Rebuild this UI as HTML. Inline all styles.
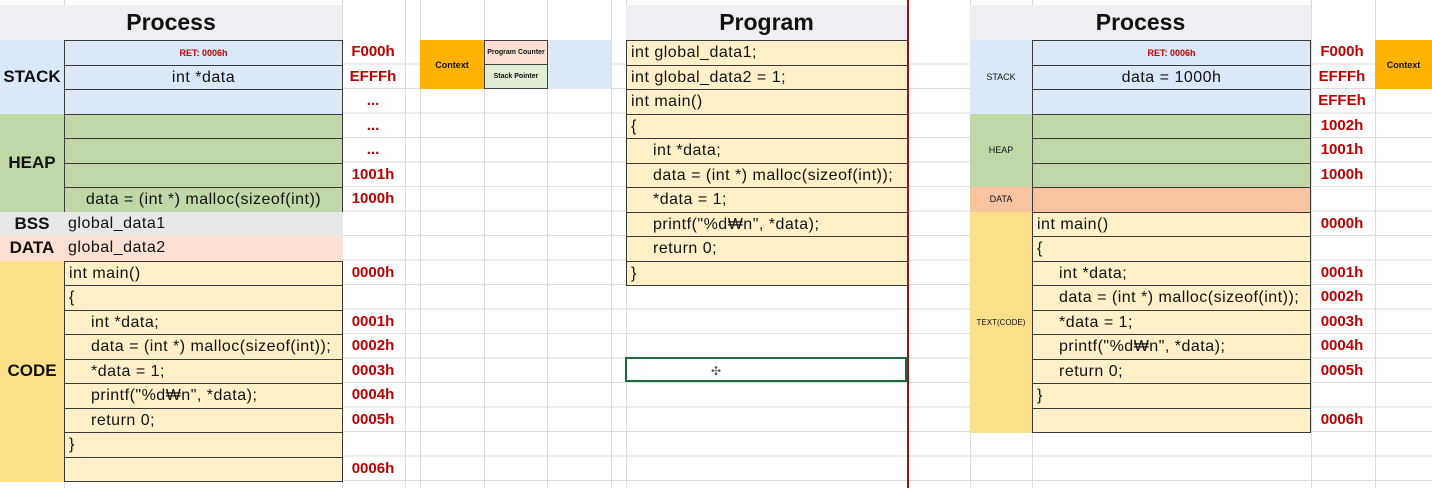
<!DOCTYPE html>
<html><head><meta charset="utf-8"><style>
body{margin:0;width:1432px;height:488px;overflow:hidden;position:relative;background:#fff;font-family:"Liberation Sans","Noto Sans CJK KR",sans-serif;color:#111}
.g{position:absolute;left:0;top:40px;width:1432px;height:448px;background:repeating-linear-gradient(to bottom,transparent 0,transparent 23.5px,#dcdcdc 23.5px,#dcdcdc 24.5px)}
.v{position:absolute;top:0;width:1px;height:488px;background:#dcdcdc}
.r{position:absolute;height:25.5px;line-height:24px;box-sizing:border-box;font-size:16px;letter-spacing:0.5px;white-space:nowrap;overflow:hidden}
.k{border:1px solid #3a3a3a}
.a{color:#c00000;font-weight:bold;font-size:15px;letter-spacing:0;text-align:center;width:62px;height:24.5px}
.L{position:absolute;box-sizing:border-box;display:flex;align-items:center;justify-content:center;font-weight:bold;font-size:17px}
.h{position:absolute;top:5px;height:35px;background:#f0eef2;font-weight:bold;font-size:23px;text-align:center;line-height:35px}
.lb{left:64px;width:279px}.rb{left:1032px;width:279px}.pb{left:626px;width:282px}
.st{background:#dae8f8}.hp{background:#c0d8a8}.cd{background:#fff0c8}
.i{padding-left:26px}.p{padding-left:4px}
</style></head><body>
<div class="g"></div>
<div class="v" style="left:64px"></div><div class="v" style="left:342px"></div><div class="v" style="left:405px"></div><div class="v" style="left:420px"></div><div class="v" style="left:484px"></div><div class="v" style="left:547px"></div><div class="v" style="left:611px"></div><div class="v" style="left:626px"></div><div class="v" style="left:970px"></div><div class="v" style="left:1032px"></div><div class="v" style="left:1311px"></div><div class="v" style="left:1375px"></div>
<div style="position:absolute;left:907px;top:0;width:2px;height:488px;background:#a01010"></div>

<div class="h" style="left:0;width:342px">Process</div>
<div class="L st" style="left:0;top:40px;width:64px;height:73.5px">STACK</div>
<div class="L hp" style="left:0;top:113.5px;width:64px;height:98px">HEAP</div>
<div class="L" style="left:0;top:211.5px;width:64px;height:24.5px;background:#e8e8e8">BSS</div>
<div class="L" style="left:0;top:236px;width:64px;height:24.5px;background:#fde0d4">DATA</div>
<div class="L" style="left:0;top:260.5px;width:64px;height:221px;background:#ffe08a">CODE</div>
<div class="r k st lb" style="top:40px;text-align:center;font-size:9px;letter-spacing:0;color:#c00000;font-weight:bold">RET: 0006h</div>
<div class="r k st lb" style="top:64.5px;text-align:center">int *data</div>
<div class="r k st lb" style="top:89px"></div>
<div class="r k hp lb" style="top:113.5px"></div>
<div class="r k hp lb" style="top:138px"></div>
<div class="r k hp lb" style="top:162.5px"></div>
<div class="r k hp lb" style="top:187px;text-align:center">data = (int *) malloc(sizeof(int))</div>
<div class="r lb p" style="top:211.5px;background:#e8e8e8">global_data1</div>
<div class="r lb p" style="top:236px;background:#fde0d4">global_data2</div>
<div class="r k cd lb p" style="top:260.5px">int main()</div>
<div class="r k cd lb p" style="top:285px">{</div>
<div class="r k cd lb i" style="top:309.5px">int *data;</div>
<div class="r k cd lb i" style="top:334px">data = (int *) malloc(sizeof(int));</div>
<div class="r k cd lb i" style="top:358.5px">*data = 1;</div>
<div class="r k cd lb i" style="top:383px">printf("%d₩n", *data);</div>
<div class="r k cd lb i" style="top:407.5px">return 0;</div>
<div class="r k cd lb p" style="top:432px">}</div>
<div class="r k cd lb" style="top:456.5px"></div>
<div class="r a" style="left:342px;top:40px">F000h</div>
<div class="r a" style="left:342px;top:64.5px">EFFFh</div>
<div class="r a" style="left:342px;top:89px">...</div>
<div class="r a" style="left:342px;top:113.5px">...</div>
<div class="r a" style="left:342px;top:138px">...</div>
<div class="r a" style="left:342px;top:162.5px">1001h</div>
<div class="r a" style="left:342px;top:187px">1000h</div>
<div class="r a" style="left:342px;top:260.5px">0000h</div>
<div class="r a" style="left:342px;top:309.5px">0001h</div>
<div class="r a" style="left:342px;top:334px">0002h</div>
<div class="r a" style="left:342px;top:358.5px">0003h</div>
<div class="r a" style="left:342px;top:383px">0004h</div>
<div class="r a" style="left:342px;top:407.5px">0005h</div>
<div class="r a" style="left:342px;top:456.5px">0006h</div>

<div style="position:absolute;left:548px;top:40px;width:63px;height:49px;background:#dae8f8"></div>
<div class="L" style="left:420px;top:40px;width:64px;height:49px;background:#ffb300;font-size:9px">Context</div>
<div class="L" style="left:484px;top:40px;width:64px;height:25px;background:#fde0d4;font-size:7px;border:1px solid #444">Program Counter</div>
<div class="L" style="left:484px;top:64px;width:64px;height:25px;background:#e0ecd4;font-size:7px;border:1px solid #444">Stack Pointer</div>

<div class="h" style="left:626px;width:281px">Program</div>
<div class="r k cd pb p" style="top:40px">int global_data1;</div>
<div class="r k cd pb p" style="top:64.5px">int global_data2 = 1;</div>
<div class="r k cd pb p" style="top:89px">int main()</div>
<div class="r k cd pb p" style="top:113.5px">{</div>
<div class="r k cd pb i" style="top:138px">int *data;</div>
<div class="r k cd pb i" style="top:162.5px">data = (int *) malloc(sizeof(int));</div>
<div class="r k cd pb i" style="top:187px">*data = 1;</div>
<div class="r k cd pb i" style="top:211.5px">printf("%d₩n", *data);</div>
<div class="r k cd pb i" style="top:236px">return 0;</div>
<div class="r k cd pb p" style="top:260.5px">}</div>
<div style="position:absolute;left:625px;top:357px;width:282px;height:25px;box-sizing:border-box;border:2px solid #1e6b3a"></div>
<div style="position:absolute;left:711px;top:364px;font-size:12px;color:#555">✣</div>

<div class="h" style="left:970px;width:341px">Process</div>
<div class="L st" style="left:970px;top:40px;width:62px;height:73.5px;font-weight:normal;font-size:9px">STACK</div>
<div class="L hp" style="left:970px;top:113.5px;width:62px;height:73.5px;font-weight:normal;font-size:9px">HEAP</div>
<div class="L" style="left:970px;top:187px;width:62px;height:24.5px;background:#f8c4a0;font-weight:normal;font-size:9px">DATA</div>
<div class="L" style="left:970px;top:211.5px;width:62px;height:221px;background:#ffe08a;font-weight:normal;font-size:8px">TEXT(CODE)</div>
<div class="r k st rb" style="top:40px;text-align:center;font-size:9px;letter-spacing:0;color:#c00000;font-weight:bold">RET: 0006h</div>
<div class="r k st rb" style="top:64.5px;text-align:center">data = 1000h</div>
<div class="r k st rb" style="top:89px"></div>
<div class="r k hp rb" style="top:113.5px"></div>
<div class="r k hp rb" style="top:138px"></div>
<div class="r k hp rb" style="top:162.5px"></div>
<div class="r k rb" style="top:187px;background:#f8c4a0"></div>
<div class="r k cd rb p" style="top:211.5px">int main()</div>
<div class="r k cd rb p" style="top:236px">{</div>
<div class="r k cd rb i" style="top:260.5px">int *data;</div>
<div class="r k cd rb i" style="top:285px">data = (int *) malloc(sizeof(int));</div>
<div class="r k cd rb i" style="top:309.5px">*data = 1;</div>
<div class="r k cd rb i" style="top:334px">printf("%d₩n", *data);</div>
<div class="r k cd rb i" style="top:358.5px">return 0;</div>
<div class="r k cd rb p" style="top:383px">}</div>
<div class="r k cd rb" style="top:407.5px"></div>
<div class="r a" style="left:1311px;top:40px">F000h</div>
<div class="r a" style="left:1311px;top:64.5px">EFFFh</div>
<div class="r a" style="left:1311px;top:89px">EFFEh</div>
<div class="r a" style="left:1311px;top:113.5px">1002h</div>
<div class="r a" style="left:1311px;top:138px">1001h</div>
<div class="r a" style="left:1311px;top:162.5px">1000h</div>
<div class="r a" style="left:1311px;top:211.5px">0000h</div>
<div class="r a" style="left:1311px;top:260.5px">0001h</div>
<div class="r a" style="left:1311px;top:285px">0002h</div>
<div class="r a" style="left:1311px;top:309.5px">0003h</div>
<div class="r a" style="left:1311px;top:334px">0004h</div>
<div class="r a" style="left:1311px;top:358.5px">0005h</div>
<div class="r a" style="left:1311px;top:407.5px">0006h</div>
<div class="L" style="left:1375px;top:40px;width:57px;height:49px;background:#ffb300;font-size:9px">Context</div>
</body></html>
